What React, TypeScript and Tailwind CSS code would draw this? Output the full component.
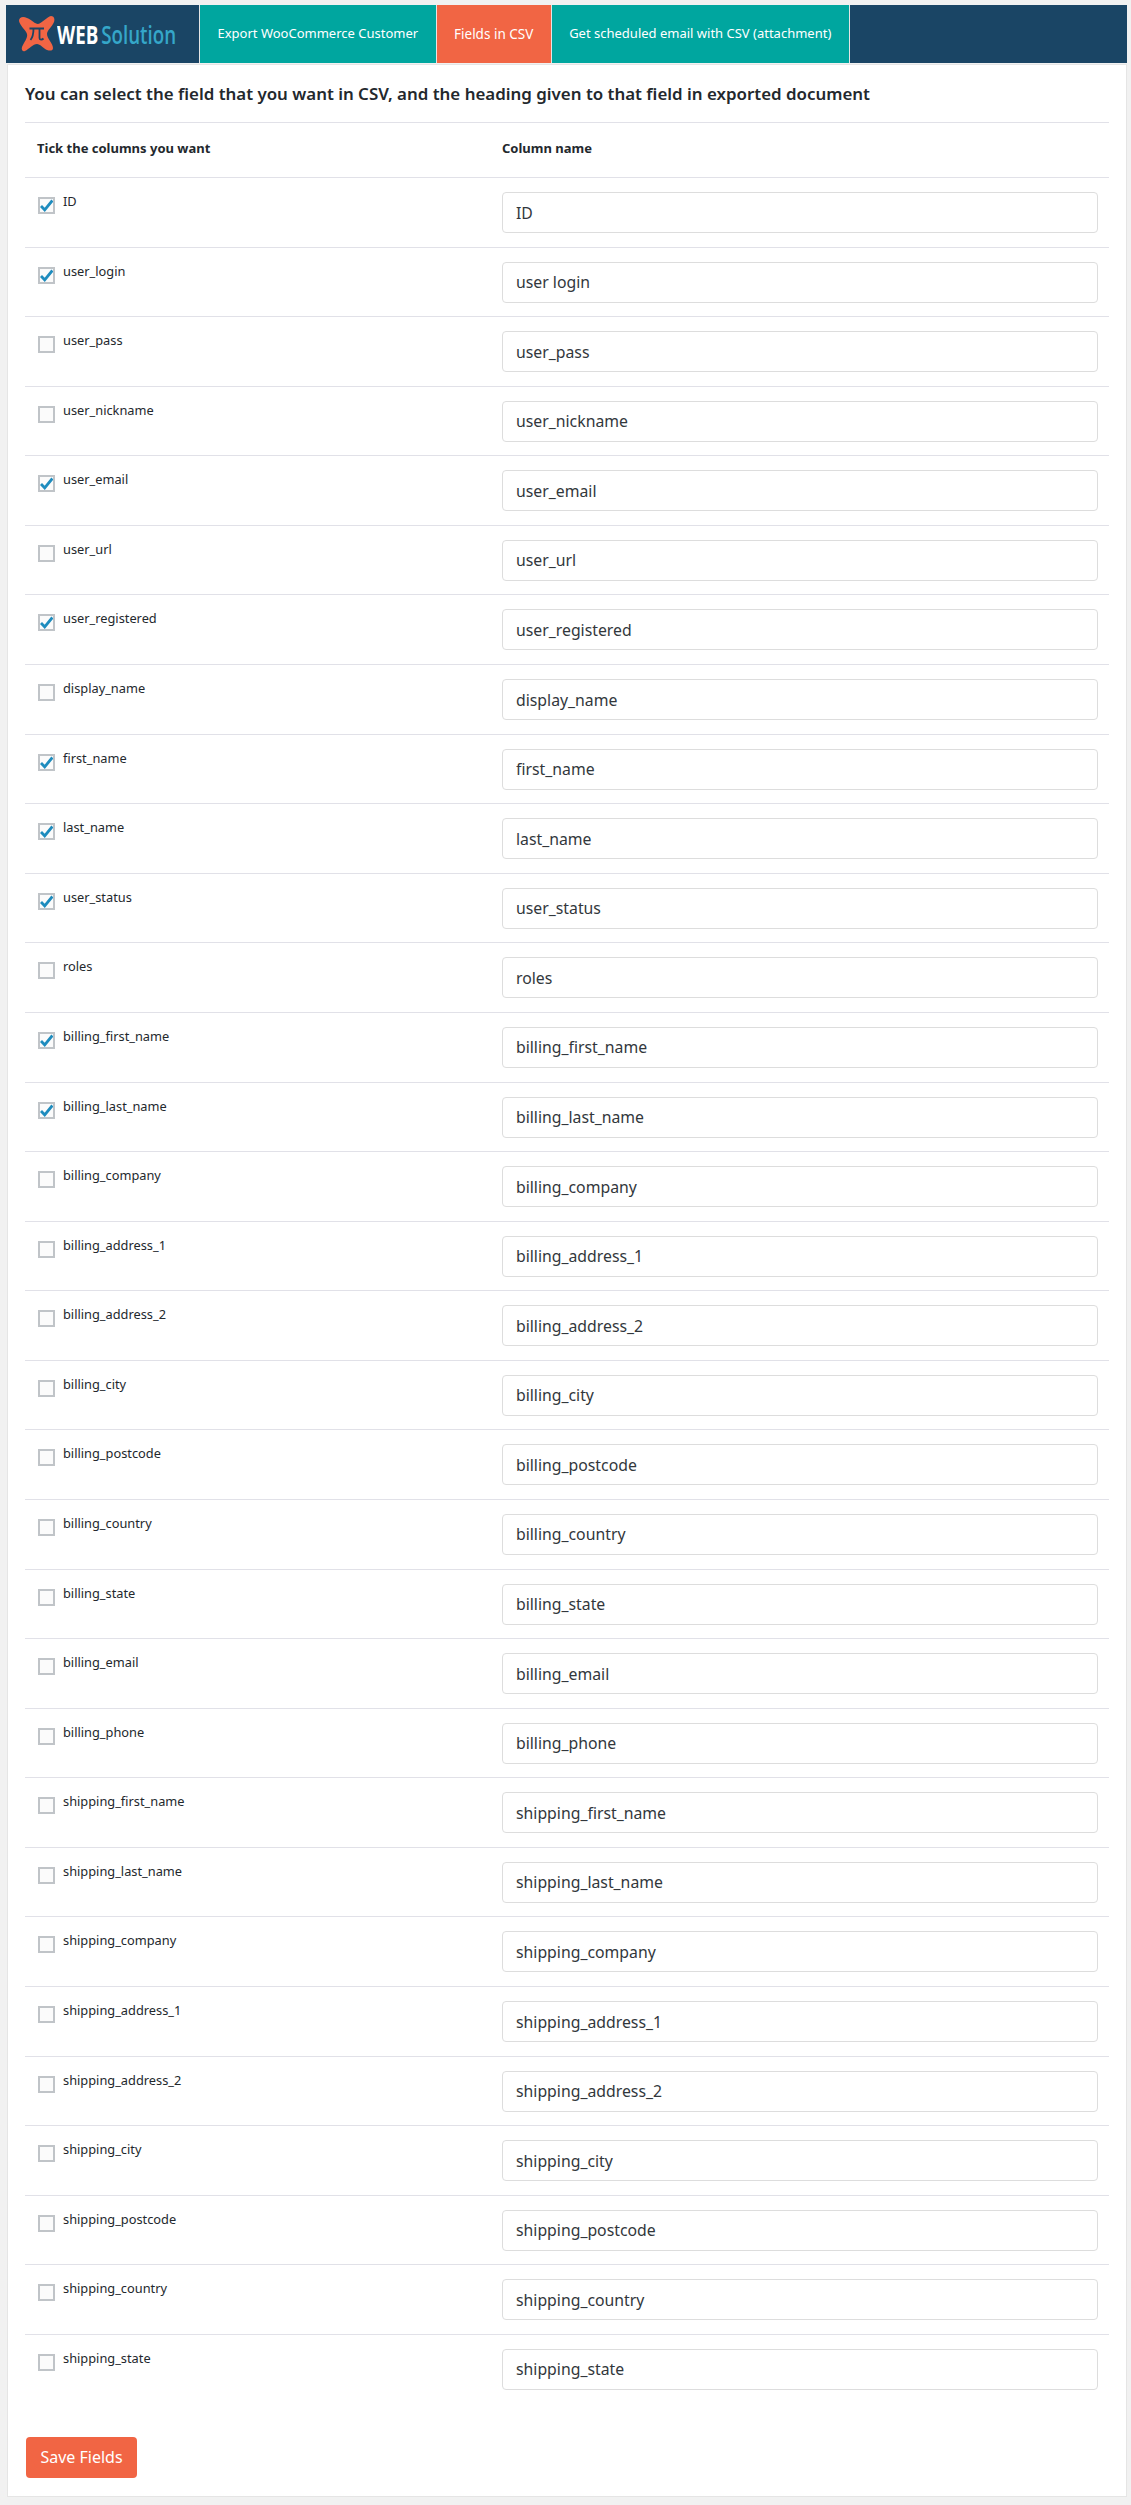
const FIELDS: [string, string, boolean][] = [
  ['ID', 'ID', true],
  ['user_login', 'user login', true],
  ['user_pass', 'user_pass', false],
  ['user_nickname', 'user_nickname', false],
  ['user_email', 'user_email', true],
  ['user_url', 'user_url', false],
  ['user_registered', 'user_registered', true],
  ['display_name', 'display_name', false],
  ['first_name', 'first_name', true],
  ['last_name', 'last_name', true],
  ['user_status', 'user_status', true],
  ['roles', 'roles', false],
  ['billing_first_name', 'billing_first_name', true],
  ['billing_last_name', 'billing_last_name', true],
  ['billing_company', 'billing_company', false],
  ['billing_address_1', 'billing_address_1', false],
  ['billing_address_2', 'billing_address_2', false],
  ['billing_city', 'billing_city', false],
  ['billing_postcode', 'billing_postcode', false],
  ['billing_country', 'billing_country', false],
  ['billing_state', 'billing_state', false],
  ['billing_email', 'billing_email', false],
  ['billing_phone', 'billing_phone', false],
  ['shipping_first_name', 'shipping_first_name', false],
  ['shipping_last_name', 'shipping_last_name', false],
  ['shipping_company', 'shipping_company', false],
  ['shipping_address_1', 'shipping_address_1', false],
  ['shipping_address_2', 'shipping_address_2', false],
  ['shipping_city', 'shipping_city', false],
  ['shipping_postcode', 'shipping_postcode', false],
  ['shipping_country', 'shipping_country', false],
  ['shipping_state', 'shipping_state', false],
]

function Logo() {
  return (
    <div className="flex w-[193px] shrink-0 items-center pl-3">
      <svg width="37" height="36" viewBox="0 0 37 36" className="shrink-0">
        <path
          d="M1 5 C1 1 5 0 9 2 C14 4 17 8 20 8 C24 7 29 1 33 0 C36 0 37 3 36 6 C34 11 29 14 29 18 C29 23 35 27 35 32 C35 35 32 35 29 34 C25 32 22 28 19 28 C15 28 11 33 7 35 C5 36 3 34 4 31 C6 26 10 22 9 18 C8 14 2 10 1 5 Z"
          fill="#f16544"
        />
        <path d="M11.5 12.5 H26 M15.5 12.5 C15.5 18 15 21 12.5 24 M21.5 12.5 V22 C21.5 24 24 24 25.5 22.5" fill="none" stroke="#1a4565" strokeWidth="1.8" />
      </svg>
      <div className="ml-[2px] flex w-[122px] origin-left scale-x-[0.75] whitespace-nowrap text-[25px] leading-none font-bold [font-family:'Open_Sans',sans-serif]">
        <span className="text-white">WEB</span>
        <span className="ml-1 font-semibold text-[#35a7c9]">Solution</span>
      </div>
    </div>
  )
}

function Tab({ label, active }: { label: string; active?: boolean }) {
  return (
    <a
      className={
        'flex items-center border-l border-[#e5e5e5] text-white ' +
        (active ? 'w-[115px] justify-center bg-[#f16544] text-[13.5px]' : 'bg-[#00a69f] px-[17.5px] text-[13px]')
      }
    >
      {label}
    </a>
  )
}

function Checkbox({ checked }: { checked: boolean }) {
  return (
    <span className="mt-[5px] flex h-[17px] w-[17px] shrink-0 items-center justify-center border-2 border-[#c0c4c8] bg-[#fbfbfb]">
      {checked && (
        <svg width="13" height="13" viewBox="0 0 13 13" className="shrink-0">
          <path d="M1 7 L4.7 10.8 L12.4 1.5" fill="none" stroke="#1e8cbe" strokeWidth="2.8" />
        </svg>
      )}
    </span>
  )
}

function FieldRow({ name, value, checked }: { name: string; value: string; checked: boolean }) {
  return (
    <div className="flex h-[69.58px] border-t border-[#e1e1e8]">
      <label className="flex w-[477px] pt-[14px] pl-[13px]">
        <Checkbox checked={checked} />
        <span className="mt-px ml-2 text-[12.8px] leading-[16px] text-[#23282d]">{name}</span>
      </label>
      <div className="flex-1 pt-[14px] pr-[11px]">
        <input
          readOnly
          value={value}
          className="h-[41px] w-full rounded border border-[#dddddd] bg-white px-[13px] text-[15.8px] text-[#32373c] outline-none"
        />
      </div>
    </div>
  )
}

export default function App() {
  return (
    <div className="h-[2505px] bg-[#f1f1f1] pt-[5px] pr-[4px] pl-[6px] [font-family:'Noto_Sans',sans-serif]">
      <div className="flex h-[58px] bg-[#1a4565]">
        <Logo />
        <div className="flex border-r border-[#e5e5e5]">
          <Tab label="Export WooCommerce Customer" />
          <Tab label="Fields in CSV" active />
          <Tab label="Get scheduled email with CSV (attachment)" />
        </div>
      </div>
      <div className="mt-px ml-px h-[2433px] border border-[#e5e5e5] bg-white px-[17px]">
        <h2 className="flex h-[57px] items-center text-[16.9px] font-semibold whitespace-nowrap text-[#23282d]">
          You can select the field that you want in CSV, and the heading given to that field in exported document
        </h2>
        <div className="w-[1084px]">
          <div className="flex h-[55px] items-center border-t border-[#e1e1e8] pb-[3px] text-[13px] font-bold text-[#23282d]">
            <div className="w-[477px] pl-[12px]">Tick the columns you want</div>
            <div>Column name</div>
          </div>
          {FIELDS.map(([name, value, checked]) => (
            <FieldRow key={name} name={name} value={value} checked={checked} />
          ))}
        </div>
        <button className="mt-[33px] ml-px h-[41px] w-[111px] rounded bg-[#f16544] text-[16px] text-white">
          Save Fields
        </button>
      </div>
    </div>
  )
}
